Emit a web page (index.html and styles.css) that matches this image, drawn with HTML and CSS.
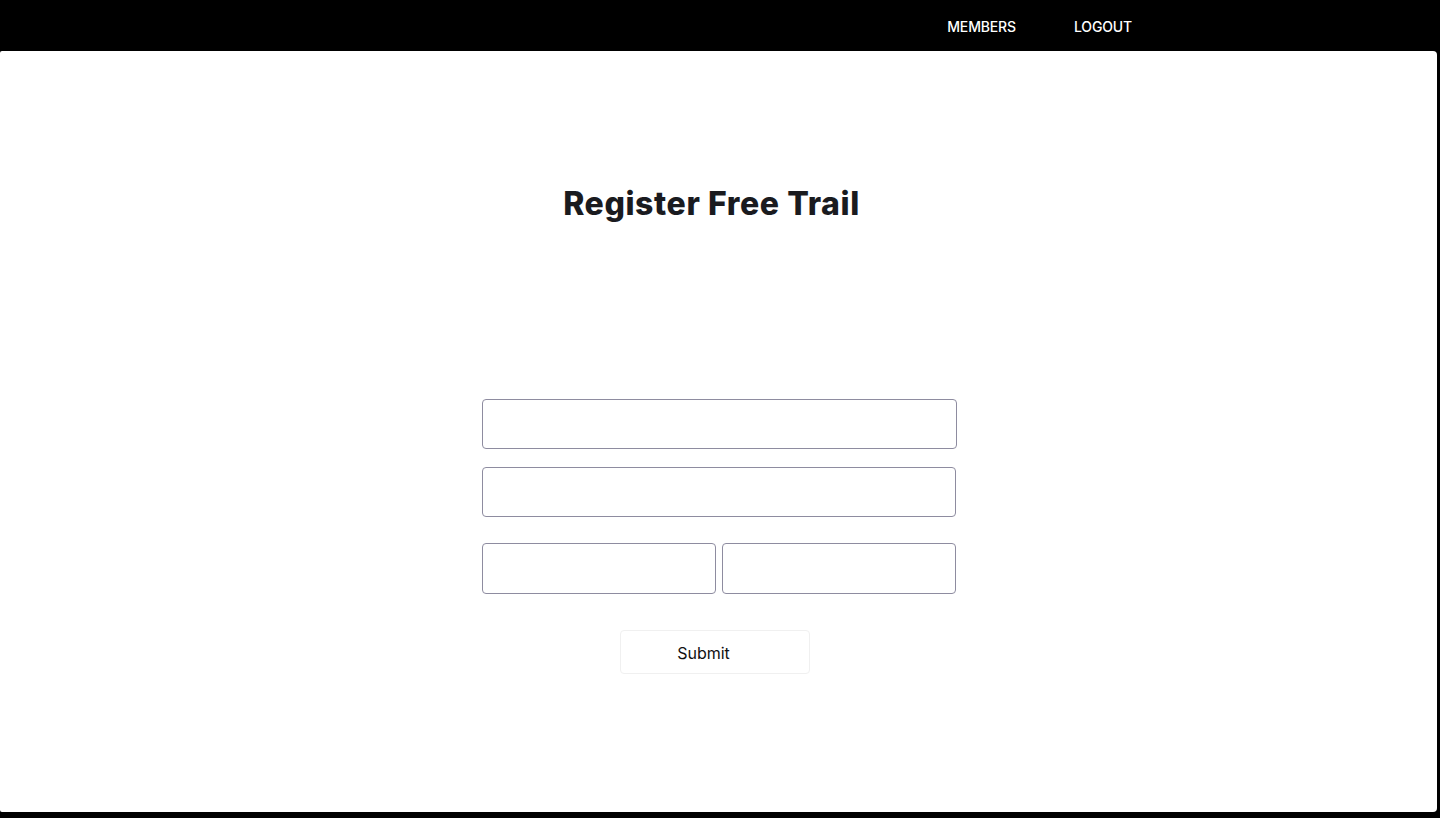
FILE: index.html
```html
<!DOCTYPE html>
<html lang="en">
<head>
<meta charset="utf-8">
<title>Register Free Trail</title>
<link rel="stylesheet" href="styles.css">
</head>
<body>
<header class="topbar">
  <nav class="nav">
    <a class="nav-link" href="#">MEMBERS</a>
    <a class="nav-link" href="#">LOGOUT</a>
  </nav>
</header>
<main class="card">
  <h1 class="title">Register Free Trail</h1>
  <form class="form">
    <input class="field field-wide" type="text">
    <input class="field field-second" type="text">
    <div class="row">
      <input class="field field-half" type="text">
      <input class="field field-half" type="text">
    </div>
    <div class="actions">
      <button class="submit" type="button">Submit</button>
    </div>
  </form>
</main>
</body>
</html>
```
FILE: styles.css
```css
* { box-sizing: border-box; }
html, body { margin: 0; padding: 0; }
body {
  background: #000;
  font-family: Inter, "Liberation Sans", sans-serif;
  height: 818px;
  overflow: hidden;
}
.topbar {
  height: 51px;
  display: flex;
  align-items: center;
  justify-content: flex-end;
  padding-right: 308px;
}
.nav { display: flex; gap: 58px; padding-top: 2px; }
.nav-link {
  color: #fff;
  text-decoration: none;
  font-size: 14px;
  font-weight: 500;
  letter-spacing: -0.15px;
}
.card {
  background: #fff;
  width: 1437px;
  height: 761px;
  border-radius: 2px 4px 4px 2px;
  padding-top: 129px;
}
.title {
  margin: 0;
  text-align: center;
  padding-right: 14px;
  font-size: 32px;
  font-weight: 800;
  line-height: 48px;
  color: #1a1b1f;
  letter-spacing: 0.6px;
}
.form {
  width: 475px;
  margin: 171px 0 0 482px;
  display: flex;
  flex-direction: column;
}
.field {
  display: block;
  height: 50px;
  border: 1px solid #8e8ca0;
  border-radius: 4px;
  background: #fff;
  font: inherit;
  padding: 0 12px;
  outline: none;
}
.field-wide { width: 475px; }
.field-second { width: 474px; margin-top: 18px; }
.row {
  display: flex;
  gap: 6px;
  margin-top: 26px;
}
.field-half { width: 234px; height: 51px; }
.actions { margin-top: 36px; padding-left: 138px; }
.submit {
  width: 190px;
  height: 44px;
  background: #fff;
  border: 1px solid #f0f0f0;
  border-radius: 4px;
  font-family: Inter, "Liberation Sans", sans-serif;
  font-size: 16px;
  color: #111;
  padding: 2px 23px 0 0;
  cursor: pointer;
}
```
